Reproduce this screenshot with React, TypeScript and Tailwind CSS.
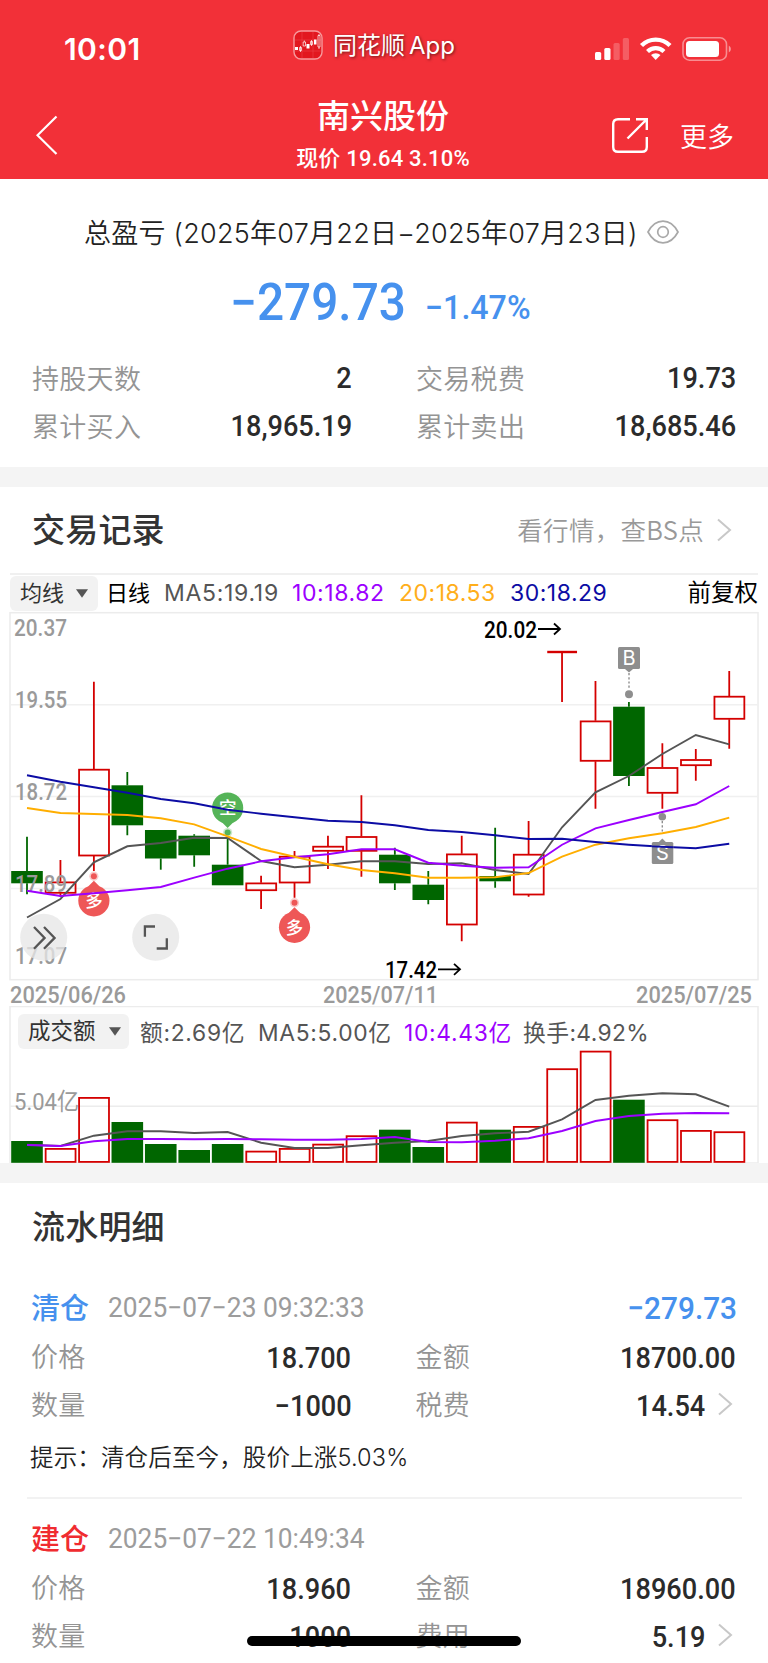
import React from "react";

const CJK = "font-['Noto_Sans_CJK_SC',sans-serif]";
const DIN = "font-[Roboto,'Noto_Sans_CJK_SC',sans-serif]";
const SF = "font-[Inter,'Noto_Sans_CJK_SC',sans-serif]";

const RED = "#d40000";
const GREEN = "#006600";
const STEP = 33.44;
const cx = (i: number) => 27 + i * STEP;

type Candle = ["r" | "g", number, number, number, number];

const candles: Candle[] = [
  ["g", 836.7, 871, 883.3, 894.3],
  ["r", 860, 881.7, 893.3, 896.7],
  ["r", 681.7, 769, 856, 871],
  ["g", 772, 785.3, 825.3, 835.3],
  ["g", 830, 830, 858.5, 869.7],
  ["g", 834.3, 835.7, 855.3, 866.7],
  ["g", 836.7, 864.7, 885.3, 885.3],
  ["r", 875.7, 882.7, 890.7, 909],
  ["r", 851, 856, 883, 897.7],
  ["r", 835.7, 846, 851.3, 869],
  ["r", 795.3, 836.3, 851.3, 876.7],
  ["g", 847.7, 854.7, 883.3, 890],
  ["g", 871, 884.7, 900, 904.3],
  ["r", 835.7, 853.7, 925, 941.3],
  ["g", 827.7, 876, 881.3, 887.7],
  ["r", 821, 854, 895, 896.7],
  ["r", 652, 652, 652, 702],
  ["r", 681, 720.7, 761.3, 808.7],
  ["g", 702, 706.7, 776, 786],
  ["r", 743.3, 767.3, 793.3, 808.7],
  ["r", 749, 759.3, 765.7, 780.7],
  ["r", 671, 696, 719.3, 748.7],
];

const ma5 = [917.5, 899, 862.3, 846.3, 843, 837.7, 838, 861, 867.3, 864.7, 861.3, 861.3, 864, 863.3, 870, 874, 827.3, 792.3, 776, 754, 735, 744.3];
const ma10 = [890.7, 896, 893.3, 890.3, 887, 877.7, 868.7, 861.3, 857.3, 854.3, 849.3, 849.3, 862.7, 865.7, 867.7, 867.3, 844.7, 828.3, 820, 812, 804.3, 786];
const ma20 = [808, 813, 814, 815, 818.3, 824.3, 836.3, 849, 856.7, 864.3, 870, 873.3, 877.7, 877.7, 877.3, 873, 856.7, 844.7, 838.3, 833.3, 827, 817.7];
const ma30 = [775.3, 781.7, 787.3, 792.7, 799, 803.3, 809.7, 813.7, 817.3, 820.7, 822, 825.3, 830, 832, 835.3, 839, 838.7, 842, 844.7, 846.7, 848.3, 843.7];

const volumes = [1141, 1148, 1097, 1122, 1144, 1150, 1144, 1150.7, 1148, 1143.7, 1135.3, 1129.7, 1147, 1121.7, 1129.7, 1126, 1068.3, 1050.7, 1099.7, 1119.3, 1130, 1131.3];
const vol5 = [1144.7, 1146, 1135.7, 1131.3, 1131.3, 1133, 1132, 1142.7, 1148, 1148, 1145.3, 1142.7, 1141, 1136, 1133.3, 1131.7, 1119.3, 1100, 1095.7, 1093.3, 1094.3, 1106.7];
const vol10 = [1145, 1146, 1141.3, 1139, 1139, 1139.3, 1139, 1139.3, 1139.7, 1139.7, 1139, 1137, 1142, 1142.3, 1140.7, 1138.3, 1131, 1121, 1116, 1113.7, 1113, 1113.3];

const Line = ({ ys, color }: { ys: number[]; color: string }) => (
  <polyline points={ys.map((y, i) => `${cx(i)},${y}`).join(" ")} fill="none" stroke={color} strokeWidth="1.9" />
);

const Label = ({ x, y, w, color = "#9a9a9a", weight = 500, children }: { x: number; y: number; w: number; color?: string; weight?: number; children: string }) => (
  <text x={x} y={y} textLength={w} lengthAdjust="spacingAndGlyphs" fontSize="23.6" fontWeight={weight} fill={color} fontFamily="Roboto, 'Noto Sans CJK SC', sans-serif">
    {children}
  </text>
);

const Pin = ({ x, y, up, color, children }: { x: number; y: number; up?: boolean; color: string; children: string }) => {
  const d = up ? -1 : 1;
  return (
    <g>
      <circle cx={x} cy={y + d * 24.6} r="4.6" fill={color} opacity="0.3" />
      <circle cx={x} cy={y + d * 24.6} r="3" fill={color} />
      <circle cx={x} cy={y} r="15.6" fill={color} />
      <path d={`M${x - 6} ${y + d * 14}L${x} ${y + d * 20}L${x + 6} ${y + d * 14}Z`} fill={color} />
      <text x={x} y={y + 6.2} textAnchor="middle" fontSize="17.5" fontWeight="500" fill="#fff" fontFamily="'Noto Sans CJK SC', sans-serif">
        {children}
      </text>
    </g>
  );
};

const Arrow = ({ x, y }: { x: number; y: number }) => (
  <path d={`M${x} ${y}h21.500M${x + 16} ${y - 5.5}l6 5.5l-6 5.5`} fill="none" stroke="#000" strokeWidth="1.8" />
);

const PriceChart = () => (
  <svg className="block h-[394px] w-full overflow-visible" viewBox="0 612 768 394">
    <g stroke="#ececec" strokeWidth="1.5" fill="none">
      <rect x="10" y="612.7" width="748" height="367" />
      <path d="M10 704.7H758M10 796.5H758M10 888.5H758" stroke="#f0f0f0" />
    </g>
    <Pin x={cx(6)} y={808} color="#55b458">空</Pin>
    <Pin x={cx(2)} y={900.8} up color="#ee5757">多</Pin>
    <Pin x={cx(8)} y={927.3} up color="#ee5757">多</Pin>
    {candles.map(([t, h, top, bot, low], i) => {
      const c = t === "r" ? RED : GREEN;
      return (
        <g key={i} stroke={c} strokeWidth="1.8" fill="none">
          <path d={`M${cx(i)} ${h}V${top}M${cx(i)} ${bot}V${low}`} />
          {t === "g" ? (
            <rect x={cx(i) - 15.8} y={top} width="31.6" height={bot - top} fill={c} stroke="none" />
          ) : bot === top ? (
            <path d={`M${cx(i) - 14.8} ${top}h29.8`} strokeWidth="2.4" />
          ) : (
            <rect x={cx(i) - 14.8} y={top + 0.7} width="29.9" height={bot - top - 1.2} />
          )}
        </g>
      );
    })}
    <Label x={14} y={635.6} w={53}>20.37</Label>
    <Label x={15} y={708} w={52}>19.55</Label>
    <Label x={15} y={800} w={52}>18.72</Label>
    <Label x={15} y={891.8} w={52}>17.89</Label>
    <Label x={15} y={964.3} w={52}>17.07</Label>
    <Line ys={ma5} color="#555" />
    <Line ys={ma10} color="#9c00ff" />
    <Line ys={ma20} color="#ffae00" />
    <Line ys={ma30} color="#0c0ca4" />
    <Label x={484} y={637.8} w={53} color="#000">20.02</Label>
    <Arrow x={538} y={629} />
    <Label x={385} y={977.8} w={52} color="#000">17.42</Label>
    <Arrow x={438} y={969.3} />
    <g fill="#8e8e8e">
      <rect x="618" y="647" width="22" height="22" rx="1.5" />
      <path d="M625 669l4 3.5l4-3.5z" />
      <circle cx="629" cy="694.3" r="4" />
      <circle cx="662.3" cy="816.7" r="3.8" />
      <path d="M658.3 842.5l4-4l4 4z" />
      <rect x="651.8" y="842" width="21.5" height="22" rx="1.5" />
      <path d="M629 673v15M662.3 821v11" stroke="#8e8e8e" strokeWidth="1.4" strokeDasharray="2.2 2" />
    </g>
    <g fontSize="20" fill="#fff" textAnchor="middle" fontFamily="Inter, sans-serif" fontWeight="400">
      <text x="629" y="665.3">B</text>
      <text x="662.5" y="860.3">S</text>
    </g>
    <path d="M652 846.4l21 .8" stroke="#0c0ca4" strokeWidth="1.9" />
    <g fill="#e6e6e6" fillOpacity="0.77">
      <circle cx="43.7" cy="937.3" r="23.5" />
      <circle cx="155.7" cy="937.3" r="23.5" />
    </g>
    <path d="M34 927l10.6 10.9l-10.6 10.9M44 927l10.6 10.9l-10.6 10.9M155 926.5H144.9V936.7M156.7 948.5H166.8V938.3" fill="none" stroke="#555" strokeWidth="2.3" />
    <Label x={10} y={1003.3} w={116}>2025/06/26</Label>
    <Label x={323} y={1003.3} w={115}>2025/07/11</Label>
    <Label x={636} y={1003.3} w={116}>2025/07/25</Label>
  </svg>
);

const VolumeChart = () => (
  <svg className="absolute inset-0 h-[158px] w-full" viewBox="0 1006 768 158">
    <g stroke="#ececec" strokeWidth="1.5" fill="none">
      <rect x="10" y="1006.5" width="748" height="156.5" />
      <path d="M10 1106.3H758" />
    </g>
    <Label x={14} y={1109.8} w={65} weight={400}>5.04亿</Label>
    {volumes.map((y, i) =>
      candles[i][0] === "g" ? (
        <rect key={i} x={cx(i) - 15.8} y={y} width="31.6" height={1162.8 - y} fill={GREEN} />
      ) : (
        <rect key={i} x={cx(i) - 14.8} y={y + 0.9} width="29.9" height={1161 - y} fill="none" stroke={RED} strokeWidth="1.8" />
      ),
    )}
    <Line ys={vol5} color="#555" />
    <Line ys={vol10} color="#9c00ff" />
  </svg>
);

const Caret = () => (
  <svg className="h-[9px] w-[12px]" viewBox="0 0 12 9"><path d="M0 0.3H12L6 8.7Z" fill="#555" /></svg>
);

const Chevron = () => (
  <svg className="h-6 w-[15px] shrink-0" viewBox="0 0 15 24"><path d="M1 1.5L13 12L1 22.5" fill="none" stroke="#c8c8c8" strokeWidth="2" /></svg>
);

const Cell = ({ label, value, more, shift = "pt-0" }: { label: string; value: string; more?: boolean; shift?: string }) => (
  <div className="flex items-center">
    <span className={`${CJK} -mt-[2px] text-[27px] font-[350] text-[#949494] tracking-[0.3px]`}>{label}</span>
    <span className={`${DIN} ${shift} ml-auto origin-right scale-x-[0.92] text-[29.5px] font-medium text-[#2b2b2b]`}>{value}</span>
    {more && <span className="ml-[13px] mr-[3px] -mt-[2px] flex"><Chevron /></span>}
  </div>
);

type Trade = { kind: string; color: string; time: string; profit?: string; cells: [string, string, boolean?][] };

const trades: Trade[] = [
  {
    kind: "清仓", color: "text-[#4691ee]", time: "2025−07−23 09:32:33", profit: "−279.73",
    cells: [["价格", "18.700"], ["金额", "18700.00"], ["数量", "−1000"], ["税费", "14.54", true]],
  },
  {
    kind: "建仓", color: "text-[#f02c30]", time: "2025−07−22 10:49:34",
    cells: [["价格", "18.960"], ["金额", "18960.00"], ["数量", "1000"], ["费用", "5.19", true]],
  },
];

const TradeBlock = ({ t }: { t: Trade }) => (
  <div>
    <div className="flex h-[50px] items-center pl-[31px] pr-[31px]">
      <span className={`${CJK} -mt-[2px] w-[77px] text-[29px] font-medium ${t.color}`}>{t.kind}</span>
      <span className={`${DIN} origin-left scale-x-[0.975] pt-[3px] text-[27px] font-normal text-[#9c9c9c]`}>{t.time}</span>
      {t.profit && <span className={`${DIN} ml-auto origin-right scale-x-[0.945] pt-[3px] text-[31.5px] font-medium text-[#4691ee]`}>{t.profit}</span>}
    </div>
    <div className="grid grid-cols-2 gap-x-16 auto-rows-[48.5px] pl-[31px] pr-8">
      {t.cells.map(([l, v, m]) => <Cell key={l} label={l} value={v} more={m} shift="pt-[4px]" />)}
    </div>
  </div>
);

export default function App() {
  return (
    <div className={`${CJK} relative h-[1663px] w-[768px] overflow-hidden bg-white leading-none whitespace-nowrap`}>
      <header className="h-[179px] bg-[#f23038] text-white">
        <div className="flex h-[92px] items-center pl-[64px] pr-[35px]">
          <span className={`${SF} mt-[6px] w-[229px] text-[30px] font-semibold tracking-[0.4px]`}>10:01</span>
          <svg className="-mt-[2px] h-[30px] w-[30px]" viewBox="0 0 30 30">
            <rect x="1" y="1" width="28" height="28" rx="7" fill="#e2171f" stroke="#f79a9d" strokeWidth="1.4" />
            <path d="M2 10H28M2 21H28M9 2V28M20 2V28" stroke="#ee4a50" strokeWidth=".5" />
            <path d="M2 17h3v3H2zM13.5 14h3v4.5h-3zM21 9.5h2.5v5H21z" fill="#fff" />
            <path d="M6.5 17.500h2v3h-2zM7.500 16v6M10.200 12h2.300v4h-2.300zM11.300 10.500v1.500M17.500 11.500h2v3h-2zM18.500 10v6M25 5.500h2V17h-2zM26 4v1.500M26 17v2" fill="none" stroke="#fff" strokeWidth=".7" />
          </svg>
          <span className="-mt-[3px] ml-[10px] text-[24px] [text-shadow:1px_1px_3px_rgba(0,0,0,0.55)]">同花顺<span className="ml-1 font-[Inter] text-[24px]">App</span></span>
          <svg className="ml-auto mt-[6px] h-[26px] w-[138px]" viewBox="595 36 138 26" fill="#fff">
            <rect x="595" y="52" width="6.2" height="8" rx="1.5" />
            <rect x="604.3" y="48" width="6.2" height="12" rx="1.5" />
            <rect x="613.5" y="43" width="6.2" height="17" rx="1.5" opacity=".22" />
            <rect x="622.8" y="38" width="6.2" height="22" rx="1.5" opacity=".22" />
            <g fill="none" stroke="#fff" strokeWidth="4.3">
              <path d="M641.5 45.5A20 20 0 0 1 670 45.5" />
              <path d="M647.5 51.5A12 12 0 0 1 664 51.5" />
            </g>
            <path d="M651 55A7 7 0 0 1 660.5 55L655.7 60Z" />
            <rect x="683" y="37.8" width="43.5" height="22.4" rx="6.5" fill="none" stroke="#fff" strokeOpacity=".45" strokeWidth="1.6" />
            <rect x="686" y="41" width="33" height="16" rx="3.5" />
            <path d="M728.8 45.5a4 4 0 0 1 0 7z" opacity=".5" />
          </svg>
        </div>
        <div className="flex h-[87px] pl-9 pr-[34px]">
          <svg className="mt-[23px] h-10 w-[22px]" viewBox="0 0 22 40"><path d="M20.5 1.5L1.5 20.3L20.5 39" fill="none" stroke="#fff" strokeWidth="2.2" /></svg>
          <div className="ml-[199px] flex w-[252px] flex-col items-center">
            <span className="mt-[6px] text-[33px] font-medium">南兴股份</span>
            <span className={`${DIN} mt-[17px] text-[22px] font-medium tracking-[0.2px]`}>现价 19.64 3.10%</span>
          </div>
          <svg className="ml-auto mt-[25px] h-[38px] w-[38px]" viewBox="0 0 38 38" fill="none" stroke="#fff" strokeWidth="2.4">
            <path d="M19 2.2H7Q2.2 2.2 2.2 7V30Q2.2 34.8 7 34.8H31Q35.8 34.8 35.8 30V20" />
            <path d="M25 2.2H35.8V13M35 3L16.5 21.5" />
          </svg>
          <span className="ml-[31px] mt-[30px] text-[27px] font-[350]">更多</span>
        </div>
      </header>

      <section className="h-[288px]">
        <div className="flex h-[70px] items-end pl-[84px]">
          <div className="flex h-8 items-center">
            <span className={`${SF} w-[563px] text-[27px] font-[350] tracking-[0.25px] text-[#222]`}>总盈亏 (2025年07月22日−2025年07月23日)</span>
            <svg className="-mt-[2px] h-6 w-8" viewBox="0 0 32 24" fill="none" stroke="#a8a8a8" strokeWidth="1.7">
              <path d="M1 12C5 4.500 10 1.200 16 1.200S27 4.500 31 12C27 19.500 22 22.800 16 22.800S5 19.500 1 12Z" />
              <circle cx="16" cy="12" r="5.3" />
            </svg>
          </div>
        </div>
        <div className={`${DIN} flex h-[106px] items-baseline pl-[230px] pt-[28px] text-[#4691ee]`}>
          <span className="w-[195px] origin-left scale-x-[0.937] text-[51px] font-medium">−279.73</span>
          <span className="relative -top-px origin-left scale-x-[0.975] text-[33px] font-medium">−1.47%</span>
        </div>
        <div className="grid grid-cols-2 auto-rows-[47.5px] gap-x-16 pl-8 pr-8">
          <Cell label="持股天数" value="2" />
          <Cell label="交易税费" value="19.73" />
          <Cell label="累计买入" value="18,965.19" />
          <Cell label="累计卖出" value="18,685.46" />
        </div>
      </section>
      <div className="h-5 bg-[#f4f4f4]" />

      <section>
        <div className="flex h-[86px] items-center justify-between pl-8 pr-[36px]">
          <h2 className="-mt-[4px] text-[33px] font-medium tracking-[0.2px] text-[#333]">交易记录</h2>
          <div className="flex items-center text-[25.5px] font-[350] text-[#999]">
            <span className="-mt-[3px] mr-[13px] tracking-[0.3px]">看行情，查BS点</span>
            <Chevron />
          </div>
        </div>
        <div className={`${SF} mx-[10px] flex h-[39px] items-center border-t-2 border-[#f0f0f0] text-[23px] font-normal`}>
          <div className="flex h-[35px] w-[88px] items-center justify-between rounded-md bg-[#f2f2f2] pl-[10px] pr-[10px] text-[22px] font-normal text-[#333]"><span className="-mt-[2px]">均线</span><Caret /></div>
          <span className="-mt-[2px] ml-[8px] w-[58px] text-[22px] font-normal">日线</span>
          <span className="w-[128px] tracking-[0.7px] text-[#555]">MA5:19.19</span>
          <span className="w-[107px] tracking-[0.6px] text-[#9c00ff]">10:18.82</span>
          <span className="w-[111px] tracking-[0.5px] text-[#ffae1a]">20:18.53</span>
          <span className="tracking-[0.5px] text-[#0c0ca4]">30:18.29</span>
          <span className="-mt-[2px] ml-auto text-[23.5px] font-normal">前复权</span>
        </div>
        <PriceChart />
        <div className="relative h-[157px]">
          <VolumeChart />
          <div className={`${SF} relative flex items-center pl-[18px] pt-2 text-[22.8px] font-normal tracking-[0.7px] text-[#555]`}>
            <div className="mr-[11px] flex h-[35px] w-[111px] items-center justify-between rounded-md bg-[#f2f2f2] pl-[10px] pr-2 text-[22.5px] font-normal tracking-normal text-[#333]">成交额<Caret /></div>
            <span className="w-[118px] pt-[3px]">额:2.69亿</span>
            <span className="w-[146px] pt-[3px]">MA5:5.00亿</span>
            <span className="w-[119px] pt-[3px] text-[#9c00ff]">10:4.43亿</span>
            <span className="pt-[3px] tracking-[0.4px]">换手:4.92%</span>
          </div>
        </div>
      </section>
      <div className="relative h-5 bg-[#f4f4f4]" />

      <section>
        <h2 className="flex h-[99px] items-center pb-[15px] pl-8 text-[33px] font-medium tracking-[0.2px] text-[#333]">流水明细</h2>
        <TradeBlock t={trades[0]} />
        <p className={`${SF} flex h-[68px] items-center pb-[11px] pl-[30px] text-[23.5px] font-[350] tracking-[0.15px] text-[#222]`}>提示：清仓后至今，股价上涨5.03%</p>
        <div className="ml-[27px] mr-[26px] h-[2px] bg-[#f2f2f2]" />
        <div className="pt-[14px]"><TradeBlock t={trades[1]} /></div>
      </section>
      <div className="absolute left-[247px] top-[1636px] h-[10px] w-[274px] rounded-full bg-black" />
    </div>
  );
}
